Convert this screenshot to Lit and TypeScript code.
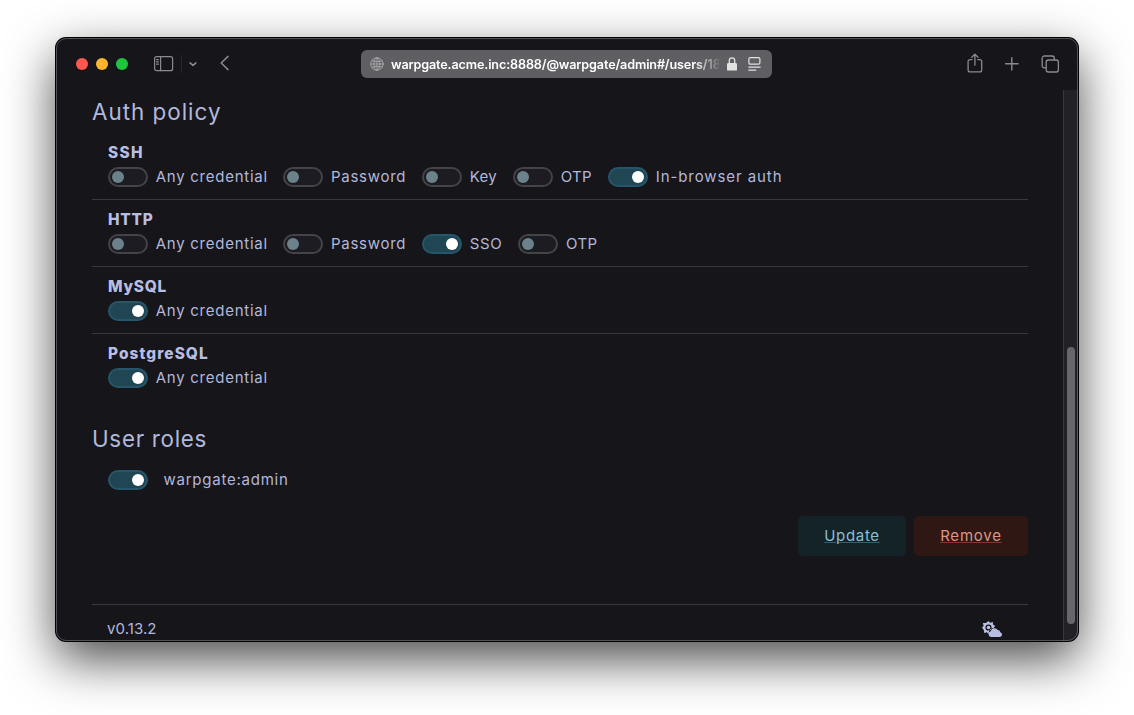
import { LitElement, html, css, svg } from "lit";
import { customElement, property } from "lit/decorators.js";

interface Option {
  label: string;
  width: number;
  tracking: number;
  on?: boolean;
}

interface Policy {
  name: string;
  tracking: number;
  options: Option[];
}

const any = (on = false): Option => ({ label: "Any credential", width: 111.4, tracking: 0.74, on });
const password: Option = { label: "Password", width: 74.6, tracking: 0.7 };
const otp: Option = { label: "OTP", width: 31, tracking: 0.3 };

const policies: Policy[] = [
  {
    name: "SSH",
    tracking: 1.3,
    options: [
      any(),
      password,
      { label: "Key", width: 27, tracking: 0.3 },
      otp,
      { label: "In-browser auth", width: 126, tracking: 0.92, on: true },
    ],
  },
  {
    name: "HTTP",
    tracking: 0.8,
    options: [any(), password, { label: "SSO", width: 32.4, tracking: 0.7, on: true }, otp],
  },
  { name: "MySQL", tracking: 0.8, options: [any(true)] },
  { name: "PostgreSQL", tracking: 1.08, options: [any(true)] },
];

@customElement("toggle-switch")
export class ToggleSwitch extends LitElement {
  @property({ type: Boolean, reflect: true }) on = false;

  static styles = css`
    :host {
      display: flex;
      flex: none;
      box-sizing: border-box;
      width: 40px;
      height: 20px;
      padding: 2px;
      border: 2px solid #444348;
      border-radius: 10px;
      background: #1d1c22;
    }
    :host([on]) {
      justify-content: flex-end;
      border-color: #25566a;
      background: #204553;
    }
    .knob {
      width: 12px;
      height: 12px;
      border-radius: 50%;
      background: #6b828b;
    }
    :host([on]) .knob {
      background: #fff;
    }
  `;

  render() {
    return html`<div class="knob"></div>`;
  }
}

@customElement("app-root")
export class AppRoot extends LitElement {
  static styles = css`
    :host {
      display: block;
      box-sizing: border-box;
      height: 715px;
      padding: 38px 56px 74px;
      overflow: hidden;
      background: #fff;
      color: #b2b8db;
      font-family: Inter, "Liberation Sans", sans-serif;
      font-size: 15px;
    }
    svg {
      display: block;
      flex: none;
      overflow: visible;
    }
    .window {
      position: relative;
      display: flex;
      flex-direction: column;
      width: 1022px;
      height: 603px;
      border-radius: 10px;
      background: #16151a;
      box-shadow: 0 0 0 1px #000, 0 18px 50px rgba(0, 0, 0, 0.72);
    }
    .window::after {
      content: "";
      position: absolute;
      inset: 0;
      border: 1px solid rgba(255, 255, 255, 0.26);
      border-radius: 10px;
      pointer-events: none;
    }
    .toolbar {
      display: flex;
      flex: none;
      align-items: center;
      height: 52px;
      padding: 0 19px 0 20px;
      box-sizing: border-box;
      color: #8b8a8e;
    }
    .lights {
      display: flex;
      gap: 8px;
      margin-right: 25px;
    }
    .light {
      width: 12px;
      height: 12px;
      border-radius: 50%;
    }
    .close {
      background: #ff5650;
    }
    .minimize {
      background: #ffb52e;
    }
    .zoom {
      background: #1fc53f;
    }
    .divider {
      width: 1px;
      height: 18px;
      margin: 0 7px 0 8px;
      background: #28272c;
    }
    .back {
      margin: -2px 0 0 23px;
    }
    .address {
      display: flex;
      align-items: center;
      box-sizing: border-box;
      width: 411px;
      height: 28px;
      margin-left: 132px;
      padding: 0 11px 0 9px;
      border-radius: 6px;
      background: #5f5e62;
      color: #e2e2e3;
    }
    .globe {
      color: #b0b0b2;
    }
    .url {
      width: 328px;
      margin: 1px 8px 0 7px;
      overflow: hidden;
      white-space: nowrap;
      color: #fff;
      font-size: 12.6px;
      font-weight: 570;
      letter-spacing: -0.13px;
      line-height: 20px;
      mask-image: linear-gradient(to right, #000 303px, transparent 331px);
    }
    .reader {
      margin-left: 10.5px;
    }
    .actions {
      display: flex;
      align-items: center;
      gap: 22px;
      margin-left: auto;
    }
    .share {
      margin: -2px 0 0;
    }
    .plus,
    .tabs {
      margin-top: -1px;
    }
    .view {
      display: flex;
      flex: 1;
      min-height: 0;
      overflow: hidden;
      border-radius: 0 0 10px 10px;
    }
    .page {
      width: 936px;
      padding: 0 35px 0 36px;
    }
    .scrollbar {
      box-sizing: border-box;
      width: 15px;
      padding: 257px 3px 17px;
      border-left: 1px solid #38373c;
      background: #222127;
    }
    .thumb {
      width: 8px;
      height: 277px;
      border-radius: 4px;
      background: #67666b;
    }
    h2 {
      margin: 0;
      font-size: 22.4px;
      font-weight: 400;
      line-height: 43px;
      height: 43px;
      white-space: nowrap;
    }
    .auth-title {
      letter-spacing: 1px;
    }
    .roles-title {
      margin-top: 16px;
      letter-spacing: 0.7px;
    }
    .policy {
      box-sizing: border-box;
      height: 67px;
      padding: 8px 16px 0;
      border-bottom: 1px solid #38373b;
    }
    .policy:last-child {
      border-bottom-color: transparent;
    }
    .name {
      height: 24px;
      color: #b8bee2;
      font-size: 15.4px;
      font-weight: 800;
      line-height: 23px;
    }
    .options {
      display: flex;
      gap: 16px;
    }
    .option {
      display: flex;
      align-items: center;
      gap: 8px;
      height: 24px;
      line-height: 24px;
      white-space: nowrap;
    }
    .option span {
      text-indent: -0.3px;
    }
    .role {
      display: flex;
      align-items: center;
      gap: 15.5px;
      height: 24px;
      margin-top: 8px;
      padding: 0 16px;
      line-height: 24px;
      letter-spacing: 0.76px;
    }
    .buttons {
      display: flex;
      justify-content: flex-end;
      gap: 8px;
      margin-top: 24px;
    }
    .button {
      box-sizing: border-box;
      height: 40px;
      border-radius: 5px;
      text-align: center;
      line-height: 40px;
      text-decoration: underline;
      text-decoration-thickness: 1px;
      text-underline-offset: 1px;
    }
    .update {
      width: 108px;
      background: #132328;
      color: #8bbfd0;
      letter-spacing: 0.7px;
      text-decoration-color: #32606f;
    }
    .remove {
      width: 114px;
      background: #2f1814;
      color: #de9488;
      letter-spacing: 0.8px;
      text-decoration-color: #81382e;
    }
    .footer {
      display: flex;
      justify-content: space-between;
      align-items: center;
      height: 48px;
      margin-top: 48px;
      padding: 0 26px 0 15px;
      border-top: 1px solid #38373b;
      letter-spacing: 0.08px;
    }
    .version {
      padding-bottom: 2px;
    }
  `;

  private option(o: Option) {
    return html`<div class="option">
      <toggle-switch ?on=${o.on}></toggle-switch>
      <span style="width:${o.width}px;letter-spacing:${o.tracking}px">${o.label}</span>
    </div>`;
  }

  private icon(width: number, height: number, body: unknown, stroke = 1.4, cls = "") {
    return html`<svg class=${cls} width=${width} height=${height} viewBox="0 0 ${width} ${height}"
      fill="none" stroke="currentColor" stroke-width=${stroke} stroke-linecap="round" stroke-linejoin="round">${body}</svg>`;
  }

  private toolbar() {
    return html`<div class="toolbar">
      <div class="lights">
        <div class="light close"></div>
        <div class="light minimize"></div>
        <div class="light zoom"></div>
      </div>
      ${this.icon(20, 16, svg`<rect x="1.6" y=".7" width="18" height="14" rx="2"/><path d="M7.6.7v14M3.6 3.6h1.8M3.6 5.9h1.8M3.6 8.2h1.8"/>`, 1.2)}
      <div class="divider"></div>
      ${this.icon(8, 6, svg`<path d="M1.1 1.9 4 4.4l2.9-2.5"/>`, 1.6)}
      ${this.icon(9, 16, svg`<path d="M8 1.4 1.2 8 8 14.6"/>`, 1.5, "back")}
      <div class="address">
        ${this.icon(14, 14, svg`<circle cx="7" cy="7" r="6.2"/><ellipse cx="7" cy="7" rx="3" ry="6.2"/><path d="M7 .8v12.4M.8 7h12.4M1.8 3.8c3 1.2 7.4 1.2 10.4 0M1.8 10.2c3-1.2 7.4-1.2 10.4 0"/>`, 0.8, "globe")}
        <div class="url">warpgate.acme.inc:8888/@warpgate/admin#/users/180</div>
        ${this.icon(10, 14, svg`<rect x="0" y="6" width="10" height="7.6" rx="1.2" fill="currentColor" stroke="none"/><path d="M2.3 6V3.6C2.3 1.8 3.4.8 5 .8s2.7 1 2.7 2.8V6"/>`, 1.3)}
        ${this.icon(13, 14, svg`<rect x=".9" y=".6" width="11" height="6.6" rx="1.5"/><path d="M.8 10.1h11.4M.8 13.1h7"/>`, 1.2, "reader")}
      </div>
      <div class="actions">
        ${this.icon(16, 20, svg`<path d="M5 6.6H3A1.9 1.9 0 0 0 1.1 8.5v8.4A1.9 1.9 0 0 0 3 18.8h9.8a1.9 1.9 0 0 0 1.9-1.9V8.5a1.9 1.9 0 0 0-1.9-1.9h-2M7.9 12.2V1.4M4.8 4.2 7.9 1.1 11 4.2"/>`, 1.3, "share")}
        ${this.icon(14, 14, svg`<path d="M6.8.6v12.4M.6 6.8H13"/>`, 1.4, "plus")}
        ${this.icon(18, 18, svg`<rect x="5.2" y="5" width="12.2" height="12" rx="2.2"/><path d="M5 12.9H3.4a2.2 2.2 0 0 1-2.2-2.2V3.2A2.2 2.2 0 0 1 3.4 1h7.7a2.2 2.2 0 0 1 2.2 2.2V5"/>`, 1.3, "tabs")}
      </div>
    </div>`;
  }

  render() {
    return html`<div class="window">
      ${this.toolbar()}
      <div class="view">
        <div class="page">
          <h2 class="auth-title">Auth policy</h2>
          <div class="policies">
            ${policies.map(
              (p) => html`<div class="policy">
                <div class="name" style="letter-spacing:${p.tracking}px">${p.name}</div>
                <div class="options">${p.options.map((o) => this.option(o))}</div>
              </div>`
            )}
          </div>
          <h2 class="roles-title">User roles</h2>
          <div class="role"><toggle-switch on></toggle-switch><span>warpgate:admin</span></div>
          <div class="buttons">
            <div class="button update">Update</div>
            <div class="button remove">Remove</div>
          </div>
          <div class="footer">
            <span class="version">v0.13.2</span>
            <svg width="20" height="16" viewBox="0 0 20 16" fill="#b9bfe2">
              <path fill-rule="evenodd" d="M6.5 0 8.1 1.8 10.9.9 11 3.6 13.3 5 11.9 6.5 11.5 7.3C9.2 7.1 7.4 8.4 7 10.6L6.5 13 4.9 11.2 2.1 12.1 2 9.4 0 6.5 1.6 4.9.9 2.1 3.9 2ZM6.5 3.4a3.1 3.1 0 1 0 0 6.2 3.1 3.1 0 0 0 0-6.2Z"/>
              <circle cx="6.5" cy="6.5" r="1.8"/>
              <path d="M9.2 16a2.9 2.9 0 0 1-.5-5.7 3.8 3.8 0 0 1 7-1.2 2.7 2.7 0 0 1 2.6 2.2A2.4 2.4 0 0 1 17.8 16Z"/>
            </svg>
          </div>
        </div>
        <div class="scrollbar"><div class="thumb"></div></div>
      </div>
    </div>`;
  }
}
